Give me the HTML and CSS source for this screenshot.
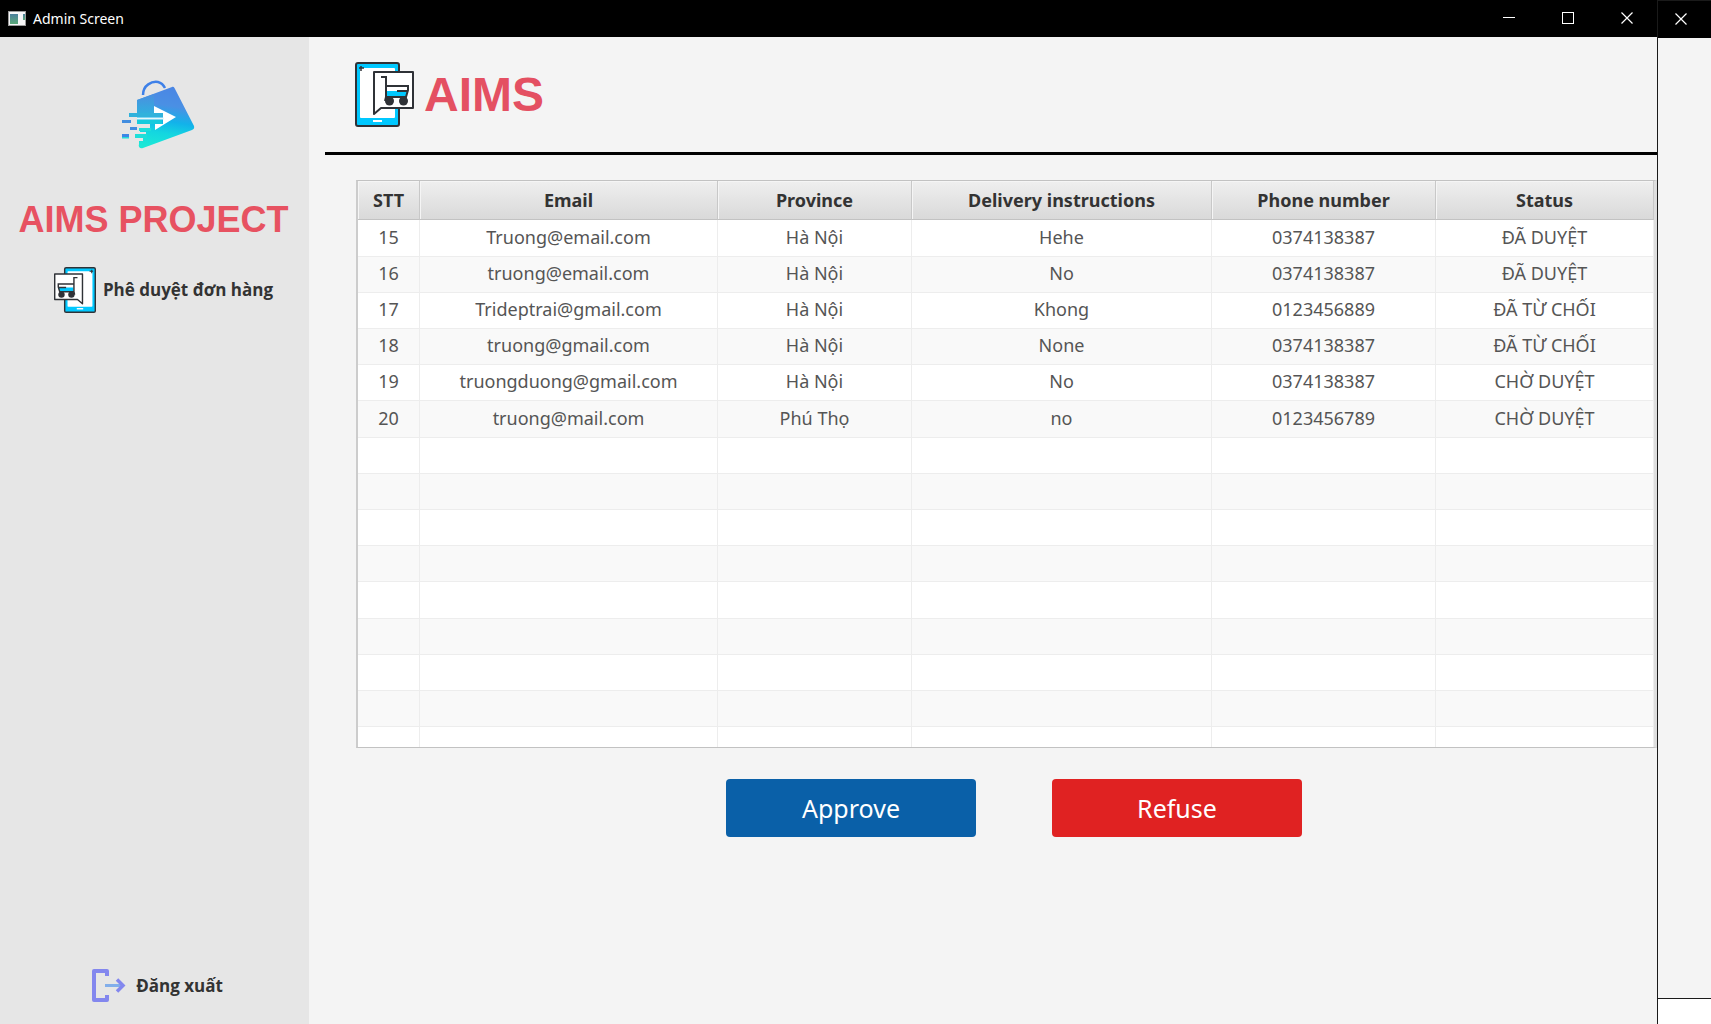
FILE: index.html
```html
<!DOCTYPE html>
<html lang="vi">
<head>
<meta charset="utf-8">
<meta name="viewport" content="width=device-width, initial-scale=1">
<title>Admin Screen</title>
<link rel="stylesheet" href="styles.css">
</head>
<body>
<div class="desktop">
  <div class="window">
    <header class="titlebar">
      <svg class="app-icon" width="18" height="15" viewBox="0 0 18 15" aria-hidden="true">
        <defs><linearGradient id="app" x1="0" y1="0" x2="0" y2="1"><stop offset="0" stop-color="#4a7f9c"/><stop offset="1" stop-color="#5aa878"/></linearGradient></defs>
        <rect width="18" height="15" fill="#9a9a9a"/><rect x="1" y="1" width="16" height="13" fill="#f6f6f8"/>
        <rect x="2" y="3" width="8" height="10" fill="url(#app)"/><rect x="15" y="3" width="2" height="6" fill="url(#app)"/>
      </svg>
      <span class="titlebar-text">Admin Screen</span>
      <div class="controls">
        <button class="control" type="button" aria-label="Minimize"><svg width="12" height="12"><path d="M0 5.500H12" stroke="#fff"/></svg></button>
        <button class="control" type="button" aria-label="Maximize"><svg width="12" height="12"><rect x=".5" y=".5" width="11" height="11" fill="none" stroke="#fff"/></svg></button>
        <button class="control" type="button" aria-label="Close"><svg width="12" height="12"><path d="M.5.5l11 11M11.500.5l-11 11" stroke="#fff" stroke-width="1.200"/></svg></button>
      </div>
    </header>
    <div class="content">
      <aside class="sidebar">
        <svg class="bag" width="74" height="70" viewBox="0 0 74 70" aria-hidden="true">
          <defs><linearGradient id="bag" x1=".55" y1="0" x2=".4" y2="1"><stop offset="0" stop-color="#4a86e4"/><stop offset=".3" stop-color="#4a90e4"/><stop offset=".55" stop-color="#12b2ea"/><stop offset=".75" stop-color="#14d6e0"/><stop offset="1" stop-color="#1ce8d6"/></linearGradient>
          <linearGradient id="side" x1="0" y1="0" x2="0" y2="1"><stop offset="0" stop-color="#4c8ee0"/><stop offset="1" stop-color="#2fb0de"/></linearGradient></defs>
          <path d="M22 15C22 5 31 1 37 2c4 1 6 4 7 6" fill="none" stroke="#3e80e8" stroke-width="2.500"/>
          <path d="M16 20 51 7c1-.5 2 0 2.500 1L73 46c.5 2 0 3-2 4L22 68c-3 1-5-1-4-4v-3h4v-3h3v-6h-6v-4h10v-8H16Z" fill="url(#bag)"/>
          <path d="M16 20 33 14V34H16Z" fill="url(#side)"/>
          <path d="M33 26 55 37 34 50V44h8V33h-9Z" fill="#fff"/>
          <path d="M8 33H42v4H8Z" fill="#30b2dc"/><path d="M16 40H41v4H16Z" fill="#16cbdd"/>
          <path d="M16 37.500H43v2H16Z" fill="#e6f8fa"/>
          <path d="M1 40h9v3H1ZM9 47h7v3H9Z" fill="#428ddf"/><path d="M1 54h7v3H1Z" fill="#3d87e6"/><path d="M1 57h7v1.500H1Z" fill="#22dcd9"/><path d="M14 54h12v4H14ZM18 48h12v3H18Z" fill="#1edfd9"/>
        </svg>
        <h1 class="brand">AIMS PROJECT</h1>
        <button class="nav" type="button">
          <svg width="42" height="46" viewBox="0 0 59 65" preserveAspectRatio="none" aria-hidden="true"><use href="#shop" transform="matrix(-1 0 0 1 59 0)"/></svg>
          <span>Phê duyệt đơn hàng</span>
        </button>
        <button class="nav logout" type="button">
          <svg width="34" height="34" viewBox="0 0 34 34" fill="none" aria-hidden="true">
            <path d="M15 7V2H2V31H15V26" stroke="#8387ee" stroke-width="4" stroke-linejoin="round"/><path d="M13 16.500H30" stroke="#82aeea" stroke-width="3"/><path d="m25 10.500 6 6-6 6" stroke="#8387ee" stroke-width="3.500"/>
          </svg>
          <span>Đăng xuất</span>
        </button>
      </aside>
      <main class="main">
        <div class="masthead">
          <svg width="59" height="65" viewBox="0 0 59 65" aria-hidden="true">
            <g id="shop">
              <rect x="1" y="1" width="43" height="63" rx="2" fill="#00c8ff" stroke="#2f3237" stroke-width="2"/>
              <rect x="5" y="6" width="35" height="50" rx="1" fill="#fff"/><path d="M4 6h5M6 4v5" stroke="#2f3237" stroke-width="1.500"/><path d="M18 59h9" stroke="#fff" stroke-width="2"/>
              <path d="M19 10H58V46H26L19 52Z" fill="#fff" stroke="#2f3237" stroke-width="2" stroke-linejoin="round"/>
              <path d="M32 29H53L51 35H32Z" fill="#00c8ff"/><path d="M26 15h5V35l-1 4M31 24H53v4l-2 7H31M42 29h11" fill="none" stroke="#2f3237" stroke-width="2"/>
              <circle cx="34.500" cy="39" r="4.500" fill="#2f3237"/><circle cx="48.500" cy="39" r="4.500" fill="#2f3237"/>
            </g>
          </svg>
          <h2 class="masthead-title">AIMS</h2>
        </div>
        <div class="table-box">
          <table class="orders">
            <colgroup><col class="c-no"><col class="c-email"><col class="c-province"><col class="c-note"><col class="c-phone"><col class="c-status"></colgroup>
            <thead><tr><th>STT</th><th>Email</th><th>Province</th><th>Delivery instructions</th><th>Phone number</th><th>Status</th></tr></thead>
            <tbody>
              <tr><td>15</td><td>Truong@email.com</td><td>Hà Nội</td><td>Hehe</td><td>0374138387</td><td>ĐÃ DUYỆT</td></tr>
              <tr><td>16</td><td>truong@email.com</td><td>Hà Nội</td><td>No</td><td>0374138387</td><td>ĐÃ DUYỆT</td></tr>
              <tr><td>17</td><td>Trideptrai@gmail.com</td><td>Hà Nội</td><td>Khong</td><td>0123456889</td><td>ĐÃ TỪ CHỐI</td></tr>
              <tr><td>18</td><td>truong@gmail.com</td><td>Hà Nội</td><td>None</td><td>0374138387</td><td>ĐÃ TỪ CHỐI</td></tr>
              <tr><td>19</td><td>truongduong@gmail.com</td><td>Hà Nội</td><td>No</td><td>0374138387</td><td>CHỜ DUYỆT</td></tr>
              <tr><td>20</td><td>truong@mail.com</td><td>Phú Thọ</td><td>no</td><td>0123456789</td><td>CHỜ DUYỆT</td></tr>
              <tr><td></td><td></td><td></td><td></td><td></td><td></td></tr>
              <tr><td></td><td></td><td></td><td></td><td></td><td></td></tr>
              <tr><td></td><td></td><td></td><td></td><td></td><td></td></tr>
              <tr><td></td><td></td><td></td><td></td><td></td><td></td></tr>
              <tr><td></td><td></td><td></td><td></td><td></td><td></td></tr>
              <tr><td></td><td></td><td></td><td></td><td></td><td></td></tr>
              <tr><td></td><td></td><td></td><td></td><td></td><td></td></tr>
              <tr><td></td><td></td><td></td><td></td><td></td><td></td></tr>
              <tr class="partial"><td></td><td></td><td></td><td></td><td></td><td></td></tr>
            </tbody>
          </table>
        </div>
        <div class="actions">
          <button class="action approve" type="button">Approve</button>
          <button class="action refuse" type="button">Refuse</button>
        </div>
      </main>
    </div>
  </div>
  <div class="backdrop">
    <div class="behind">
      <div class="behind-bar"><button class="control" type="button" aria-label="Close window behind"><svg width="12" height="12"><path d="M.5.5l11 11M11.500.5l-11 11" stroke="#fff" stroke-width="1.200"/></svg></button></div>
    </div>
  </div>
</div>
</body>
</html>
```
FILE: styles.css
```css
* { box-sizing: border-box; }

body {
  margin: 0;
  background: #fff;
  color: #333;
  font-family: "Noto Sans", "Open Sans", sans-serif;
}

button {
  border: 0;
  padding: 0;
  background: none;
  color: inherit;
  font-family: inherit;
}

svg { display: block; flex: none; }

.desktop {
  display: grid;
  grid-template-columns: minmax(0, 1fr) 54px;
  min-height: 100vh;
}

.window {
  display: flex;
  flex-direction: column;
  background: #f4f4f4;
}

.titlebar {
  display: flex;
  align-items: center;
  gap: 7px;
  height: 37px;
  padding-left: 8px;
  background: #000;
  color: #fff;
  font-size: 14px;
}

.controls { display: flex; margin-left: auto; height: 100%; padding-right: 1px; }

.control {
  display: flex;
  align-items: center;
  justify-content: center;
  width: 59px;
  height: 36px;
}

.content {
  display: grid;
  grid-template-columns: 309px minmax(0, 1fr);
  flex: 1;
}

.sidebar {
  display: flex;
  flex-direction: column;
  align-items: center;
  padding: 43px 0 21px;
  background: #e6e6e6;
}

.bag { margin-left: 6px; }

.brand {
  margin: 50px 2px 0 0;
  color: #e75261;
  font: bold 36px/40px "Liberation Sans", Arial, sans-serif;
}

.nav {
  display: flex;
  align-items: center;
  gap: 7px;
  margin: 27px 0 0 18px;
  font: bold 17px/24px "Open Sans", sans-serif;
}

.logout { gap: 10px; margin: auto 0 0 6px; }

.main { padding-left: 16px; }

.masthead {
  display: flex;
  align-items: center;
  gap: 10px;
  height: 118px;
  padding-left: 30px;
  border-bottom: 3px solid #000;
}

.masthead-title {
  margin: 0;
  color: #e45062;
  font: bold 48px/56px "Liberation Sans", Arial, sans-serif;
}

.table-box {
  margin: 25px 0 0 31px;
  border: solid;
  border-width: 1px 3px 1px 2px;
  border-color: #c2c2c2 #dedede #c2c2c2 #ccc;
  background: #fff;
}

.orders {
  width: 100%;
  table-layout: fixed;
  border-collapse: separate;
  border-spacing: 0;
  text-align: center;
  font-size: 18px;
  line-height: 24px;
}

.c-no { width: 62px; }
.c-email { width: 298px; }
.c-province { width: 194px; }
.c-note { width: 300px; }
.c-phone { width: 224px; }
.c-status { width: 218px; }

.orders th {
  height: 39px;
  padding: 0;
  border-right: 1px solid #c8c8c8;
  border-bottom: 1px solid #c2c2c2;
  background: linear-gradient(#efefef, #d9d9d9);
  box-shadow: inset 1px 1px #f5f5f5;
}

.orders td {
  height: 36px;
  padding: 0 0 3px;
  border-right: 1px solid #ededed;
  border-bottom: 1px solid #ededed;
  color: #555;
}

.orders tbody tr:nth-child(even) { background: #f9f9f9; }
.orders tbody tr:nth-child(5n + 1) td { height: 37px; }
.orders tbody .partial td { height: 20px; border-bottom: 0; }

.actions {
  display: flex;
  justify-content: center;
  gap: 76px;
  padding: 31px 0 31px 46px;
}

.action {
  width: 250px;
  height: 58px;
  border-radius: 4px;
  color: #fff;
  font-size: 25px;
}

.approve { background: #0a60a8; }
.refuse { background: #e02222; }

.backdrop { border-left: 1px solid #1a1a1a; }

.behind {
  height: calc(100vh - 25px);
  border: solid #1a1a1a;
  border-width: 1px 0;
  background: #f4f4f4;
}

.behind-bar {
  display: flex;
  height: 37px;
  background: #000;
}

.behind-bar .control { width: 46px; }
```
